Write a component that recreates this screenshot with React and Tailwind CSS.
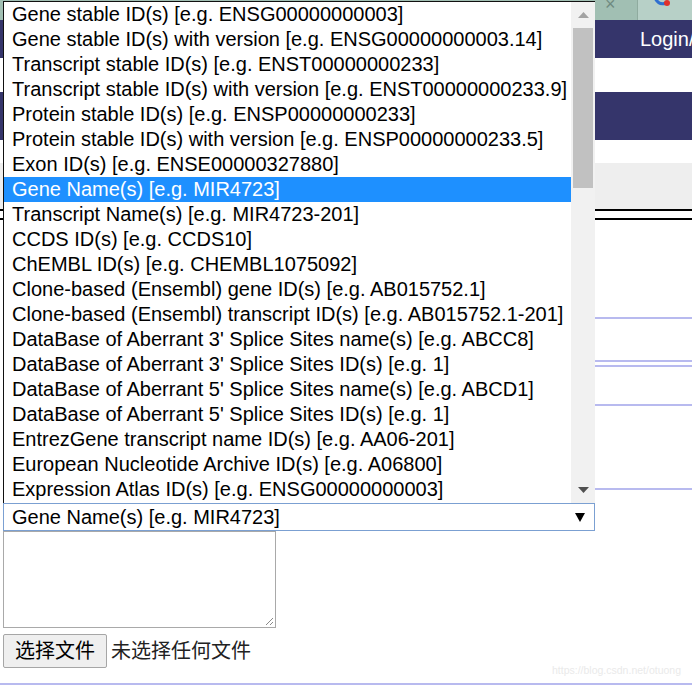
import React from "react";

const OPTIONS = [
  "Gene stable ID(s) [e.g. ENSG00000000003]",
  "Gene stable ID(s) with version [e.g. ENSG00000000003.14]",
  "Transcript stable ID(s) [e.g. ENST00000000233]",
  "Transcript stable ID(s) with version [e.g. ENST00000000233.9]",
  "Protein stable ID(s) [e.g. ENSP00000000233]",
  "Protein stable ID(s) with version [e.g. ENSP00000000233.5]",
  "Exon ID(s) [e.g. ENSE00000327880]",
  "Gene Name(s) [e.g. MIR4723]",
  "Transcript Name(s) [e.g. MIR4723-201]",
  "CCDS ID(s) [e.g. CCDS10]",
  "ChEMBL ID(s) [e.g. CHEMBL1075092]",
  "Clone-based (Ensembl) gene ID(s) [e.g. AB015752.1]",
  "Clone-based (Ensembl) transcript ID(s) [e.g. AB015752.1-201]",
  "DataBase of Aberrant 3' Splice Sites name(s) [e.g. ABCC8]",
  "DataBase of Aberrant 3' Splice Sites ID(s) [e.g. 1]",
  "DataBase of Aberrant 5' Splice Sites name(s) [e.g. ABCD1]",
  "DataBase of Aberrant 5' Splice Sites ID(s) [e.g. 1]",
  "EntrezGene transcript name ID(s) [e.g. AA06-201]",
  "European Nucleotide Archive ID(s) [e.g. A06800]",
  "Expression Atlas ID(s) [e.g. ENSG00000000003]",
];

const SELECTED = 7;

function Line() {
  return <div className="h-[2px] bg-[#b8baef]" />;
}

export default function App() {
  return (
    <div
      className="relative w-[692px] h-[685px] overflow-hidden bg-white text-black"
      style={{ fontFamily: "'Liberation Sans', 'Noto Sans CJK SC', Arial, sans-serif" }}
    >
      {/* Page behind */}
      <div className="flex h-[20px]">
        <div className="w-[637px] bg-[#a1bfb3] relative">
          <span className="absolute left-[605px] top-[-9px] text-[18px] text-[#6f8a80]">×</span>
        </div>
        <div className="w-[1px] bg-[#8fab9f]" />
        <div className="flex-1 bg-[#b7d0c7] relative">
          <svg className="absolute left-[14px] top-[-6px]" width="22" height="16" viewBox="0 0 22 16">
            <path d="M3 4 Q7 12 14 9" stroke="#2f6fd0" strokeWidth="3" fill="none" />
            <circle cx="15" cy="9" r="3" fill="#e0312b" />
          </svg>
        </div>
      </div>
      <div className="h-[38px] bg-[#35356b] flex items-center">
        <span className="ml-[640px] text-white text-[20px] leading-none whitespace-nowrap">Login/</span>
      </div>
      <div className="h-[34px] bg-white" />
      <div className="h-[48px] bg-[#35356b]" />
      <div className="h-[23px] bg-white" />
      <div className="h-[46px] bg-[#eeeeee]" />
      <div className="border-t-2 border-b-2 border-black box-content" style={{ height: 7 }} />

      <div className="flex h-[465px] border-b-2 border-[#b8baef]">
        <div className="w-[595px] pl-[3px] pt-[283px] flex flex-col">
          {/* Select */}
          <div className="w-[592px] h-[28px] border border-[#7ba0d2] flex items-center justify-between pl-[8px] pr-[9px] bg-white">
            <span className="text-[20px] leading-none whitespace-nowrap">Gene Name(s) [e.g. MIR4723]</span>
            <svg width="10" height="9" viewBox="0 0 10 9">
              <polygon points="0,0 10,0 5,9" fill="#000" />
            </svg>
          </div>
          {/* Textarea */}
          <div className="relative w-[273px] h-[97px] border border-[#a9a9a9] bg-white">
            <svg className="absolute right-[1px] bottom-[1px]" width="9" height="9" viewBox="0 0 9 9">
              <line x1="8" y1="1" x2="1" y2="8" stroke="#8a8a8a" strokeWidth="1" />
              <line x1="8" y1="5" x2="5" y2="8" stroke="#8a8a8a" strokeWidth="1" />
            </svg>
          </div>
          {/* File input */}
          <div className="flex items-center mt-[6px]">
            <button className="w-[104px] h-[34px] bg-[#efefef] border border-[#a6a6a6] rounded-[2px] text-[20px] leading-none text-black flex items-center justify-center">
              选择文件
            </button>
            <span className="ml-[4px] text-[20px] leading-none text-[#222]">未选择任何文件</span>
          </div>
        </div>
        <div className="flex-1 flex flex-col relative">
          <div className="h-[97px]" />
          <Line />
          <div className="h-[41px]" />
          <Line />
          <div className="h-[3px]" />
          <Line />
          <div className="h-[37px]" />
          <Line />
          <div className="h-[82px]" />
          <Line />
        </div>
        <span className="absolute left-[552px] top-[665px] text-[10.5px] leading-none text-[#eaeaea] whitespace-nowrap">
          https://blog.csdn.net/otuong
        </span>
      </div>

      {/* Open dropdown list overlay */}
      <div className="absolute left-[3px] top-[1px] w-[592px] h-[502px] bg-white border-t border-l border-[#111] flex">
        <div className="flex-1 flex flex-col">
          {OPTIONS.map((o, i) => (
            <div
              key={i}
              className={
                i === SELECTED
                  ? "h-[25px] pl-[8px] text-[20px] leading-[25px] whitespace-nowrap bg-[#1e90ff] text-white"
                  : "h-[25px] pl-[8px] text-[20px] leading-[25px] whitespace-nowrap"
              }
            >
              {o}
            </div>
          ))}
        </div>
        <div className="w-[24px] bg-[#f1f1f1] flex flex-col items-center">
          <div className="h-[26px] flex items-center justify-center">
            <svg width="11" height="6" viewBox="0 0 11 6">
              <polygon points="0,6 11,6 5.5,0" fill="#a3a3a3" />
            </svg>
          </div>
          <div className="w-[20px] h-[160px] bg-[#c1c1c1]" />
          <div className="flex-1" />
          <div className="h-[26px] flex items-center justify-center">
            <svg width="11" height="6" viewBox="0 0 11 6">
              <polygon points="0,0 11,0 5.5,6" fill="#505050" />
            </svg>
          </div>
        </div>
      </div>
    </div>
  );
}
